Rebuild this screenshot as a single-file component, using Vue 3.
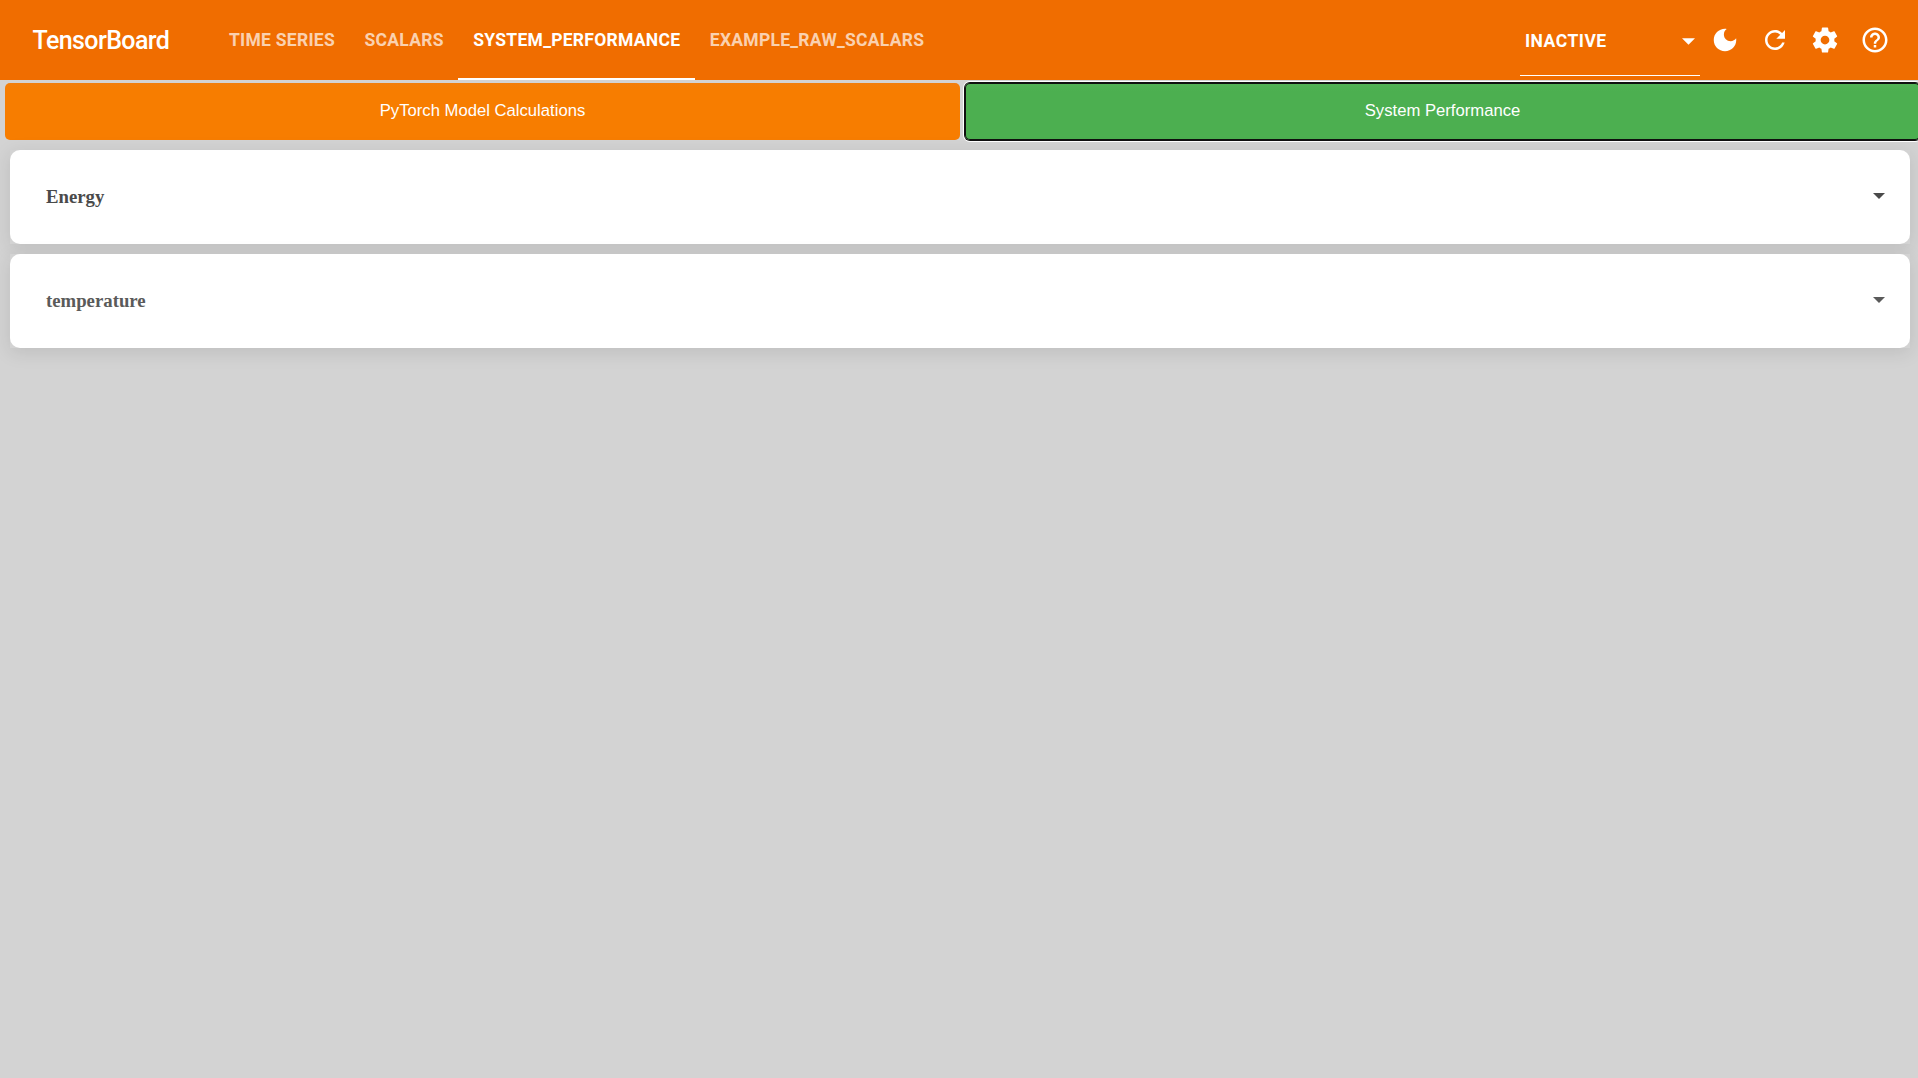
<script setup>
import { ref } from 'vue'

const tabs = ['TIME SERIES', 'SCALARS', 'SYSTEM_PERFORMANCE', 'EXAMPLE_RAW_SCALARS']
const activeTab = ref('SYSTEM_PERFORMANCE')
const cards = [
  { title: 'Energy', color: '#4a4a4a' },
  { title: 'temperature', color: '#5a5a5a' },
]
const icons = [
  { name: 'dark mode', path: 'M12 3c-4.97 0-9 4.03-9 9s4.03 9 9 9 9-4.03 9-9c0-.46-.04-.92-.1-1.36-.98 1.37-2.58 2.26-4.4 2.26-2.98 0-5.4-2.42-5.4-5.4 0-1.81.89-3.42 2.26-4.4C12.92 3.04 12.46 3 12 3z' },
  { name: 'reload', path: 'M17.65 6.35C16.2 4.9 14.21 4 12 4c-4.42 0-7.99 3.58-7.99 8s3.57 8 7.99 8c3.73 0 6.84-2.55 7.73-6h-2.08c-.82 2.33-3.04 4-5.65 4-3.31 0-6-2.69-6-6s2.69-6 6-6c1.66 0 3.14.69 4.22 1.78L13 11h7V4l-2.35 2.35z' },
  { name: 'settings', path: 'M19.43 12.98c.04-.32.07-.64.07-.98s-.03-.66-.07-.98l2.11-1.65c.19-.15.24-.42.12-.64l-2-3.46c-.12-.22-.39-.3-.61-.22l-2.49 1c-.52-.4-1.08-.73-1.69-.98l-.38-2.65C14.46 2.18 14.25 2 14 2h-4c-.25 0-.46.18-.49.42l-.38 2.65c-.61.25-1.17.59-1.69.98l-2.49-1c-.23-.09-.49 0-.61.22l-2 3.46c-.13.22-.07.49.12.64l2.11 1.65c-.04.32-.07.65-.07.98s.03.66.07.98l-2.11 1.65c-.19.15-.24.42-.12.64l2 3.46c.12.22.39.3.61.22l2.49-1c.52.4 1.08.73 1.69.98l.38 2.65c.03.24.24.42.49.42h4c.25 0 .46-.18.49-.42l.38-2.65c.61-.25 1.17-.59 1.69-.98l2.49 1c.23.09.49 0 .61-.22l2-3.46c.12-.22.07-.49-.12-.64l-2.11-1.65zM12 15.5c-1.93 0-3.5-1.57-3.5-3.5s1.57-3.5 3.5-3.5 3.5 1.57 3.5 3.5-1.57 3.5-3.5 3.5z' },
  { name: 'help', path: 'M11 18h2v-2h-2v2zm1-16C6.48 2 2 6.48 2 12s4.48 10 10 10 10-4.48 10-10S17.52 2 12 2zm0 18c-4.41 0-8-3.59-8-8s3.59-8 8-8 8 3.59 8 8-3.59 8-8 8zm0-14c-2.21 0-4 1.79-4 4h2c0-1.1.9-2 2-2s2 .9 2 2c0 2-3 1.75-3 5h2c0-2.25 3-2.5 3-5 0-2.21-1.79-4-4-4z' },
]
</script>

<template>
  <div class="app">
    <header class="toolbar">
      <span class="brand">TensorBoard</span>
      <nav class="tabs">
        <a v-for="t in tabs" :key="t" class="tab" :class="{ active: t === activeTab }" @click="activeTab = t">{{ t }}</a>
      </nav>
      <div class="select">
        <span>INACTIVE</span>
        <svg width="13" height="7" viewBox="0 0 10 5"><path d="M0 0l5 5 5-5z" fill="currentColor" /></svg>
      </div>
      <div class="icons">
        <svg v-for="i in icons" :key="i.name" :aria-label="i.name" width="30" height="30" viewBox="0 0 24 24"><path :d="i.path" fill="currentColor" /></svg>
      </div>
    </header>
    <main>
      <div class="switcher">
        <button class="choice">PyTorch Model Calculations</button>
        <button class="choice selected">System Performance</button>
      </div>
      <div class="cards">
        <div v-for="c in cards" :key="c.title" class="slot">
          <section class="card" :style="{ color: c.color }">
            <h4>{{ c.title }}</h4>
            <svg width="12" height="6" viewBox="0 0 12 6"><path d="M0 0h12L6 6z" fill="currentColor" /></svg>
          </section>
        </div>
      </div>
    </main>
  </div>
</template>

<style>
body {
  background: #d3d3d3;
  overflow: hidden;
}
</style>

<style scoped>
.app {
  height: 1078px;
  overflow: hidden;
  background: #d3d3d3;
}
.toolbar {
  box-sizing: border-box;
  height: 80px;
  display: flex;
  align-items: center;
  padding: 0 28px 0 32.5px;
  background: #f06d00;
  color: #fff;
  font-family: Roboto, sans-serif;
  font-weight: 500;
}
.brand {
  width: 181.5px;
  font-size: 25px;
  letter-spacing: -0.6px;
}
.tabs {
  display: flex;
  height: 80px;
}
.tab {
  box-sizing: border-box;
  padding: 0 14.5px 0 15px;
  border-bottom: 2px solid transparent;
  font-size: 17.5px;
  font-weight: 700;
  letter-spacing: 0.27px;
  line-height: 80px;
  height: 80px;
  color: rgba(255, 255, 255, 0.7);
}
.tab.active {
  color: #fff;
  border-color: #fff;
}
.select {
  box-sizing: border-box;
  display: flex;
  align-items: center;
  justify-content: space-between;
  width: 180px;
  height: 70px;
  margin: 2px 10px 0 auto;
  padding: 0 5px;
  border-bottom: 1px solid #fff;
  font-size: 17.5px;
  font-weight: 700;
  letter-spacing: 0.5px;
}
.select svg {
  margin-top: 1px;
}
.icons {
  display: flex;
  gap: 20px;
}
.icons svg {
  display: block;
}
.switcher {
  display: flex;
  gap: 5px;
  width: 1920px;
  box-sizing: border-box;
  padding: 3px 0 0 5px;
}
.choice {
  flex: 1;
  height: 57px;
  padding: 0 0 1px;
  border: 0;
  border-radius: 5px;
  background: linear-gradient(#f27e0b, #f77d00 7px);
  color: #fff;
  font-family: "Liberation Sans", Arial, sans-serif;
  font-size: 16.667px;
}
.choice.selected {
  background: linear-gradient(#54b256, #4caf50 8px);
  box-shadow: inset 0 0 0 1px #101010, 0 0 0 1px #101010, 0 0 0 2px #fff;
}
.cards {
  display: flex;
  flex-direction: column;
  gap: 10px;
  padding: 10px 8px 0 10px;
}
.slot {
  background: #d3d3d3;
  box-shadow: 0 4px 18px rgba(0, 0, 0, 0.1);
}
.card {
  box-sizing: border-box;
  display: flex;
  align-items: center;
  justify-content: space-between;
  height: 94px;
  padding: 0 25px 0 36px;
  border-radius: 10px;
  background: #fff;
}
.card h4 {
  margin: 0;
  font: bold 18.75px "Liberation Serif", "Times New Roman", serif;
}
.card svg {
  display: block;
  margin-bottom: 2px;
}
</style>
